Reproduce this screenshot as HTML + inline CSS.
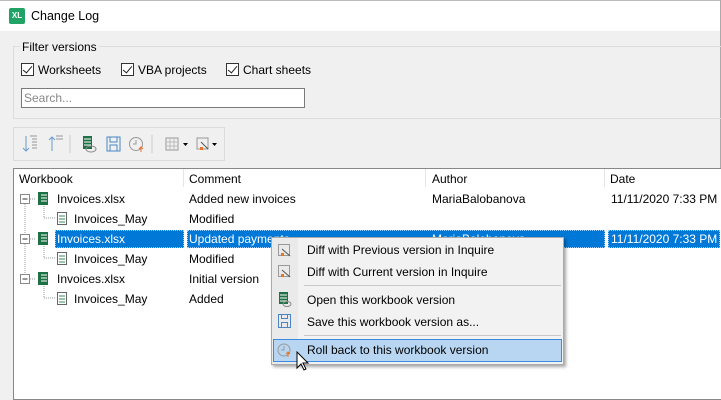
<!DOCTYPE html>
<html><head><style>
*{box-sizing:border-box;margin:0;padding:0}
body{width:721px;height:400px;overflow:hidden;background:#f0f0f0;font-family:"Liberation Sans",sans-serif;font-size:12px;color:#000;position:relative}
.abs{position:absolute}
.t{position:absolute;white-space:nowrap;font-size:12px;line-height:14px}
.cb{position:absolute;width:13px;height:13px;border:1px solid #333;background:#fff}
.cb:after{content:"";position:absolute;left:3px;top:0px;width:4px;height:8px;border:solid #222;border-width:0 1.5px 1.5px 0;transform:rotate(40deg)}
.sel{background:#0078d7;color:#fff;outline:1px dotted #9cf;outline-offset:-1px}
</style></head><body>
<div class="abs" style="left:0;top:0;width:721px;height:31px;background:#fff;border-top:1px solid #bbb;border-right:1px solid #aaa"></div>
<div class="abs" style="left:9px;top:8px;width:16px;height:16px;background:#21a366;border-radius:2px;color:#fff;font-weight:bold;font-size:8px;line-height:16px;text-align:center">XL</div>
<div class="t" style="left:31px;top:9px;font-size:12.5px">Change Log</div>
<div class="abs" style="left:720px;top:0;width:1px;height:400px;background:#aaa"></div>
<div class="abs" style="left:13px;top:46px;width:708px;height:73px;border:1px solid #dcdcdc;border-right:none"></div>
<div class="t" style="left:20px;top:40px;background:#f0f0f0;padding:0 2px">Filter versions</div>
<div class="cb" style="left:21px;top:63px"></div><div class="t" style="left:38px;top:63px">Worksheets</div>
<div class="cb" style="left:121px;top:63px"></div><div class="t" style="left:138px;top:63px">VBA projects</div>
<div class="cb" style="left:226px;top:63px"></div><div class="t" style="left:243px;top:63px">Chart sheets</div>
<div class="abs" style="left:21px;top:88px;width:284px;height:20px;background:#fff;border:1px solid #7a7a7a"></div>
<div class="t" style="left:24px;top:91px;color:#888">Search...</div>
<div class="abs" style="left:13px;top:127px;width:212px;height:34px;border:1px solid #dcdcdc"></div>
<svg class="abs" style="left:20px;top:133px" width="200" height="22" viewBox="0 0 200 22">
<g stroke="#6a9bd1" fill="none" stroke-width="1"><path d="M6 3v15M3 15l3 3 3-3"/><path d="M10 3h7M12 6h5M12 9h5M12 12h5M12 15h5" stroke="#999"/>
<path d="M32 18V4M29 7l3-3 3 3"/><path d="M36 3h7M36 6h7" stroke="#999"/></g>
<line x1="50" y1="2" x2="50" y2="20" stroke="#ccc"/>
<rect x="63" y="3" width="9" height="13" fill="#1e7145"/><path d="M64 6h7M64 9h7M64 12h7" stroke="#fff"/><ellipse cx="71" cy="16" rx="5" ry="3" fill="none" stroke="#888"/>
<rect x="87" y="4" width="13" height="14" fill="none" stroke="#4a86c5"/><rect x="90" y="4" width="7" height="5" fill="none" stroke="#4a86c5"/><rect x="90" y="12" width="7" height="6" fill="none" stroke="#4a86c5"/>
<circle cx="116" cy="11" r="6.5" fill="none" stroke="#999"/><path d="M116 7v4h-3" stroke="#999" fill="none"/><path d="M121 19v-5M119 16l2-2 2 2" stroke="#e8742a" fill="none"/>
<line x1="132" y1="2" x2="132" y2="20" stroke="#ccc"/>
<rect x="146" y="5" width="12" height="12" fill="none" stroke="#999"/><path d="M146 9h12M146 13h12M150 5v12M154 5v12" stroke="#bbb"/><path d="M163 10h5l-2.5 3z" fill="#000"/>
<rect x="177" y="5" width="11" height="11" fill="none" stroke="#999"/><path d="M181 9l7 7" stroke="#555"/><rect x="180" y="14" width="3" height="3" fill="#e8742a"/><path d="M192 10h5l-2.5 3z" fill="#000"/>
</svg>
<div class="abs" style="left:13px;top:168px;width:708px;height:232px;background:#fff;border-left:1px solid #888;border-top:1px solid #888;border-bottom:1px solid #888"></div>
<div class="abs" style="left:183px;top:169px;width:1px;height:18px;background:#e5e5e5"></div>
<div class="abs" style="left:425px;top:169px;width:1px;height:18px;background:#e5e5e5"></div>
<div class="abs" style="left:604px;top:169px;width:1px;height:18px;background:#e5e5e5"></div>
<div class="t" style="left:19px;top:172px">Workbook</div>
<div class="t" style="left:189px;top:172px">Comment</div>
<div class="t" style="left:432px;top:172px">Author</div>
<div class="t" style="left:610px;top:172px">Date</div>
<div class="abs sel" style="left:55px;top:230px;width:129px;height:18px"></div>
<div class="abs sel" style="left:187px;top:230px;width:418px;height:18px"></div>
<div class="abs sel" style="left:608px;top:230px;width:112px;height:18px"></div>
<svg class="abs" style="left:14px;top:188px" width="60" height="125">
<g stroke="#999" stroke-dasharray="1 1" fill="none"><path d="M11 16v80M16 11h6M16 51h6M16 91h6M30 18v12h12M30 58v12h12M30 98v12h12"/></g>
<g fill="#fff" stroke="#888"><rect x="6.5" y="6.5" width="9" height="9"/><rect x="6.5" y="46.5" width="9" height="9"/><rect x="6.5" y="86.5" width="9" height="9"/></g>
<path d="M8.5 11h5M8.5 51h5M8.5 91h5" stroke="#333"/>
<g fill="#1e7145"><rect x="24" y="4" width="10" height="13"/><rect x="24" y="44" width="10" height="13"/><rect x="24" y="84" width="10" height="13"/></g>
<g stroke="#fff"><path d="M27 7h6M27 10h6M27 13h6M27 47h6M27 50h6M27 53h6M27 87h6M27 90h6M27 93h6"/></g>
<g fill="#fff" stroke="#666"><rect x="43.5" y="24.5" width="9" height="12"/><rect x="43.5" y="64.5" width="9" height="12"/><rect x="43.5" y="104.5" width="9" height="12"/></g>
<g stroke="#3a8a5a"><path d="M45 28h6M45 31h6M45 34h6M45 68h6M45 71h6M45 74h6M45 108h6M45 111h6M45 114h6"/></g>
</svg>
<div class="t" style="left:57px;top:192px">Invoices.xlsx</div>
<div class="t" style="left:74px;top:212px">Invoices_May</div>
<div class="t" style="left:57px;top:232px;color:#fff">Invoices.xlsx</div>
<div class="t" style="left:74px;top:252px">Invoices_May</div>
<div class="t" style="left:57px;top:272px">Invoices.xlsx</div>
<div class="t" style="left:74px;top:292px">Invoices_May</div>
<div class="t" style="left:189px;top:192px">Added new invoices</div>
<div class="t" style="left:189px;top:212px">Modified</div>
<div class="t" style="left:189px;top:232px;color:#fff">Updated payments</div>
<div class="t" style="left:189px;top:252px">Modified</div>
<div class="t" style="left:189px;top:272px">Initial version</div>
<div class="t" style="left:189px;top:292px">Added</div>
<div class="t" style="left:432px;top:192px">MariaBalobanova</div>
<div class="t" style="left:432px;top:232px;color:#fff">MariaBalobanova</div>
<div class="t" style="left:611px;top:192px">11/11/2020 7:33 PM</div>
<div class="t" style="left:611px;top:232px;color:#fff">11/11/2020 7:33 PM</div>
<div class="abs" style="left:271px;top:237px;width:293px;height:128px;background:#f2f2f2;border:1px solid #aaa;box-shadow:2px 2px 3px rgba(0,0,0,.35)"></div>
<div class="abs" style="left:272px;top:238px;width:26px;height:126px;background:#eaeaea"></div>
<div class="abs" style="left:304px;top:285px;width:257px;height:1px;background:#c8c8c8"></div>
<div class="abs" style="left:304px;top:335px;width:257px;height:1px;background:#c8c8c8"></div>
<div class="abs" style="left:273px;top:339px;width:289px;height:23px;background:#b8d6f2;border:1px solid #3c8be0"></div>
<svg class="abs" style="left:275px;top:240px" width="30" height="130">
<rect x="3.5" y="4.5" width="11" height="11" fill="none" stroke="#999"/><path d="M7 9l8 7" stroke="#555"/><rect x="6" y="13" width="3" height="3" fill="#e8742a"/>
<rect x="3.5" y="25.5" width="11" height="11" fill="none" stroke="#999"/><path d="M7 30l8 7" stroke="#555"/><rect x="6" y="34" width="3" height="3" fill="#e8742a"/>
<rect x="4" y="52" width="9" height="12" fill="#1e7145"/><path d="M5 55h7M5 58h7M5 61h7" stroke="#fff"/><ellipse cx="12" cy="64" rx="4" ry="2.5" fill="none" stroke="#888"/>
<rect x="3.5" y="74.5" width="12" height="13" fill="none" stroke="#4a86c5"/><rect x="6.5" y="74.5" width="6" height="4" fill="none" stroke="#4a86c5"/><rect x="6.5" y="82.5" width="6" height="5" fill="none" stroke="#4a86c5"/>
<circle cx="9" cy="110" r="6" fill="none" stroke="#999"/><path d="M9 106v4h-3" stroke="#999" fill="none"/><path d="M13 117v-5M11 114l2-2 2 2" stroke="#e8742a" fill="none"/>
</svg>
<div class="t" style="left:307px;top:243px">Diff with Previous version in Inquire</div>
<div class="t" style="left:307px;top:265px">Diff with Current version in Inquire</div>
<div class="t" style="left:307px;top:293px">Open this workbook version</div>
<div class="t" style="left:307px;top:315px">Save this workbook version as...</div>
<div class="t" style="left:307px;top:343px">Roll back to this workbook version</div>
<svg class="abs" style="left:296px;top:351px" width="14" height="22"><path d="M1 1v16l4-4 3 6 2-1-3-6h5z" fill="#fff" stroke="#000"/></svg>
</body></html>
